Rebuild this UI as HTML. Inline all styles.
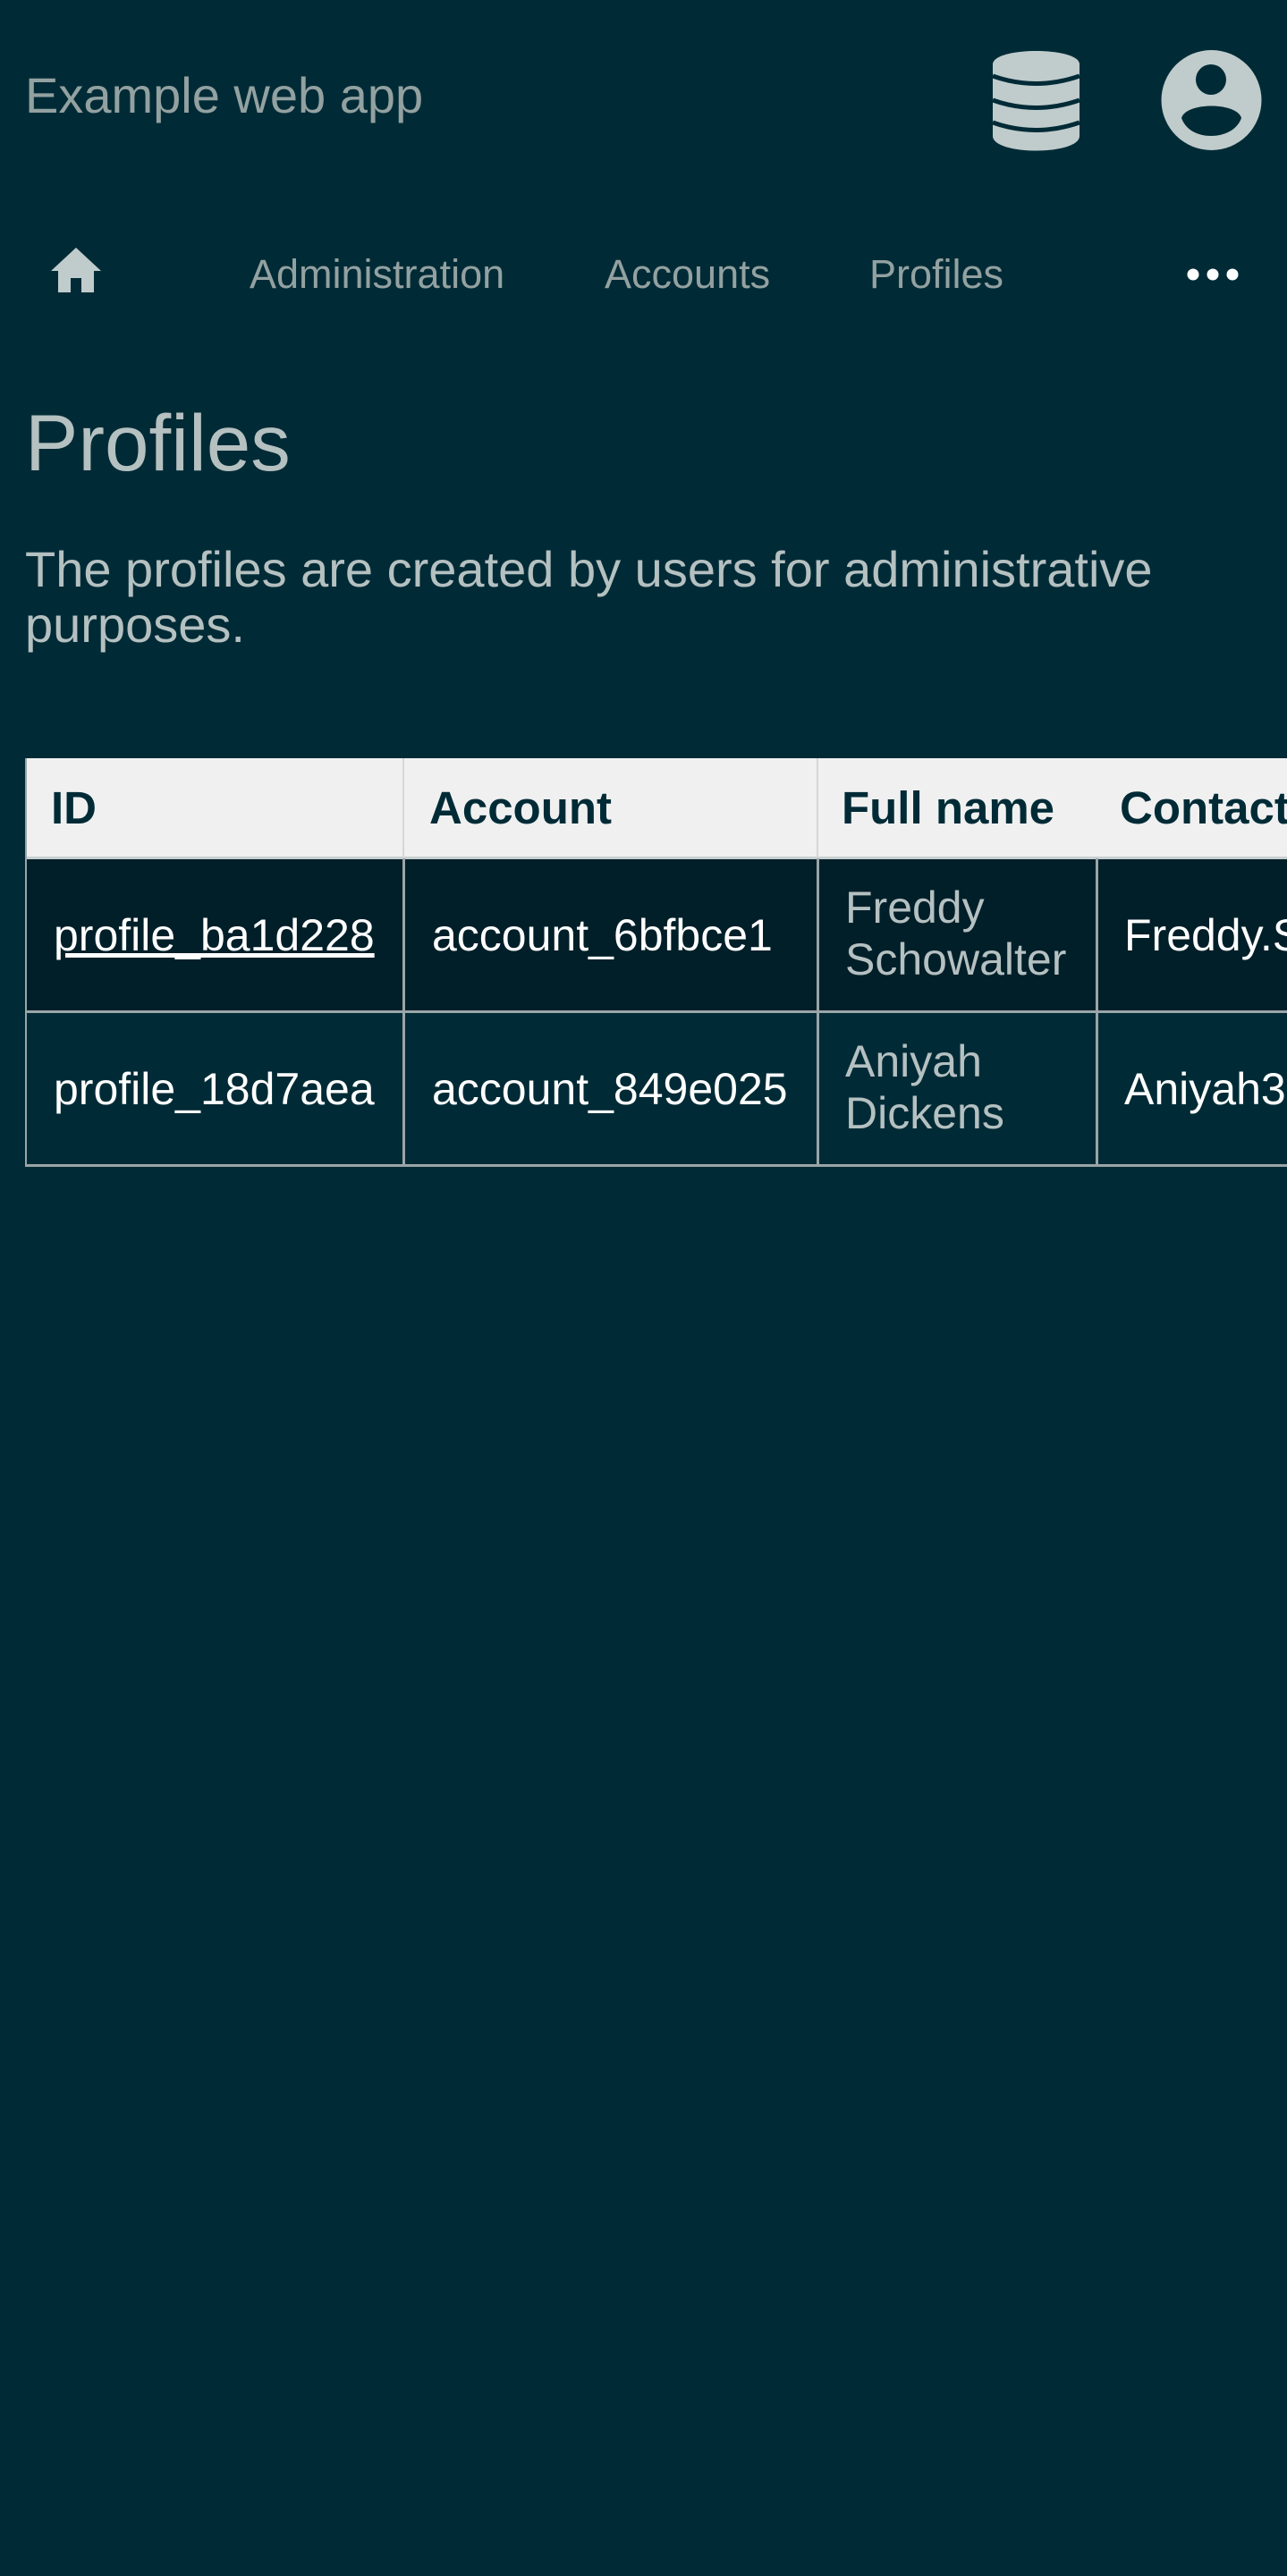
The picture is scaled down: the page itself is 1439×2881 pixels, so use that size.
<!DOCTYPE html>
<html><head><meta charset="utf-8"><style>
*{margin:0;padding:0;box-sizing:border-box}
html,body{width:1439px;height:2881px;overflow:hidden;background:#002b36;font-family:"Liberation Sans",sans-serif}
#w{position:relative;width:1439px;height:2881px;overflow:hidden}
.abs{position:absolute;white-space:nowrap}
.title{left:28px;top:72px;font-size:56px;line-height:70px;color:#93a1a1}
.nav{top:280px;font-size:45px;line-height:54px;color:#93a1a1}
h1{position:absolute;left:28px;top:445px;font-size:89px;font-weight:normal;line-height:100px;color:#b5c0c1}
p.d{position:absolute;left:28px;top:606px;width:1400px;font-size:56px;line-height:62px;color:#b5c0c1}
.td{font-size:50px;color:#fff}
.th{font-size:51px;line-height:112px;font-weight:bold;color:#002b36;top:848px}
</style></head><body><div id="w">
<div class="abs title">Example web app</div>
<svg class="abs" style="left:1108px;top:54px" width="102" height="116" viewBox="1108 54 102 116">
<path fill="#c0cbcc" d="M1110 72 C1110 52 1207 52 1207 72 L1207 152 C1207 174 1110 174 1110 152 Z"/>
<path fill="none" stroke="#002b36" stroke-width="5" d="M1110 85 Q1158 102 1207 85 M1110 112 Q1158 129 1207 112 M1110 137 Q1158 154 1207 137"/>
</svg>
<svg class="abs" style="left:1297px;top:54px" width="116" height="116" viewBox="1297 54 116 116">
<circle cx="1354.5" cy="112" r="56" fill="#c0cbcc"/>
<circle cx="1354" cy="89" r="17" fill="#002b36"/>
<path fill="#002b36" d="M1321 132 C1326 114 1383 114 1388 132 C1383 146 1368 152 1354 152 C1340 152 1326 146 1321 132 Z"/>
</svg>
<svg class="abs" style="left:55px;top:276px" width="60" height="52" viewBox="0 0 60 52">
<path fill="#c0cbcc" d="M30 1 L58 27 L50 27 L50 51 L36 51 L36 35 L24 35 L24 51 L10 51 L10 27 L2 27 Z"/>
</svg>
<div class="abs nav" style="left:279px">Administration</div>
<div class="abs nav" style="left:676px">Accounts</div>
<div class="abs nav" style="left:972px">Profiles</div>
<svg class="abs" style="left:1325px;top:296px" width="62" height="22"><circle cx="9" cy="11" r="6.5" fill="#fff"/><circle cx="31" cy="11" r="6.5" fill="#fff"/><circle cx="53" cy="11" r="6.5" fill="#fff"/></svg>
<h1>Profiles</h1>
<p class="d">The profiles are created by users for administrative purposes.</p>

<div class="abs" style="left:28px;top:848px;width:1411px;height:112px;background:#f0f0f0"></div>
<div class="abs" style="left:28px;top:960px;width:1411px;height:172px;background:#001f29"></div>
<div class="abs" style="left:28px;top:958px;width:1411px;height:3px;background:#c9cfd0"></div>
<div class="abs" style="left:28px;top:1130px;width:1411px;height:3px;background:#9aa5a7"></div>
<div class="abs" style="left:28px;top:1302px;width:1411px;height:3px;background:#9aa5a7"></div>
<div class="abs" style="left:28px;top:848px;width:2px;height:456px;background:#9aa5a7"></div>
<div class="abs" style="left:450px;top:848px;width:2px;height:112px;background:#d6d6d6"></div>
<div class="abs" style="left:913px;top:848px;width:2px;height:112px;background:#d6d6d6"></div>
<div class="abs" style="left:450px;top:960px;width:3px;height:344px;background:#9aa5a7"></div>
<div class="abs" style="left:913px;top:960px;width:3px;height:344px;background:#9aa5a7"></div>
<div class="abs" style="left:1225px;top:960px;width:3px;height:344px;background:#9aa5a7"></div>

<div class="abs th" style="left:57px">ID</div>
<div class="abs th" style="left:480px">Account</div>
<div class="abs th" style="left:941px">Full name</div>
<div class="abs th" style="left:1252px">Contact</div>

<div class="abs td" style="left:60px;top:960px;line-height:172px;text-decoration:underline">profile_ba1d228</div>
<div class="abs td" style="left:483px;top:960px;line-height:172px">account_6bfbce1</div>
<div class="abs td" style="left:945px;top:986px;line-height:58px;color:#b5c0c1">Freddy<br>Schowalter</div>
<div class="abs td" style="left:1257px;top:960px;line-height:172px">Freddy.Schowalter</div>

<div class="abs td" style="left:60px;top:1132px;line-height:172px">profile_18d7aea</div>
<div class="abs td" style="left:483px;top:1132px;line-height:172px">account_849e025</div>
<div class="abs td" style="left:945px;top:1158px;line-height:58px;color:#b5c0c1">Aniyah<br>Dickens</div>
<div class="abs td" style="left:1257px;top:1132px;line-height:172px">Aniyah3</div>
</div></body></html>
